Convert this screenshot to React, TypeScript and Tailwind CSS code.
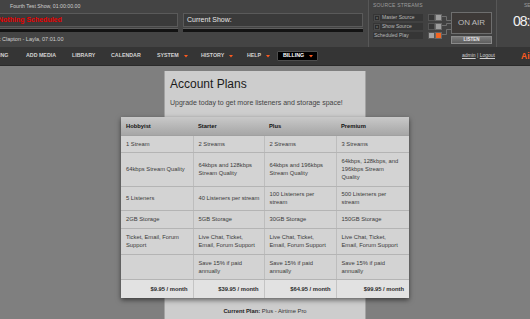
import React from "react";

const Tri = () => (
  <svg width="4" height="3" viewBox="0 0 4 3" className="ml-[5px] shrink-0">
    <path d="M0 0 L4 0 L2 2.5 Z" fill="#ff5a1f" />
  </svg>
);

const rows: { h: string; cells: React.ReactNode[] }[] = [
  { h: "h-[17px]", cells: ["1 Stream", "2 Streams", "2 Streams", "3 Streams"] },
  {
    h: "h-[34px]",
    cells: [
      "64kbps Stream Quality",
      <>64kbps and 128kbps<br />Stream Quality</>,
      <>64kbps and 196kbps<br />Stream Quality</>,
      <>64kbps, 128kbps, and<br />196kbps Stream<br />Quality</>,
    ],
  },
  {
    h: "h-[24px]",
    cells: [
      "5 Listeners",
      "40 Listeners per stream",
      <>100 Listeners per<br />stream</>,
      <>500 Listeners per<br />stream</>,
    ],
  },
  { h: "h-[18px]", cells: ["2GB Storage", "5GB Storage", "30GB Storage", "150GB Storage"] },
  {
    h: "h-[26px]",
    cells: [
      <>Ticket, Email, Forum<br />Support</>,
      <>Live Chat, Ticket,<br />Email, Forum Support</>,
      <>Live Chat, Ticket,<br />Email, Forum Support</>,
      <>Live Chat, Ticket,<br />Email, Forum Support</>,
    ],
  },
  {
    h: "h-[25px]",
    cells: [
      "",
      <>Save 15% if paid<br />annually</>,
      <>Save 15% if paid<br />annually</>,
      <>Save 15% if paid<br />annually</>,
    ],
  },
];

const prices = ["$9.95 / month", "$39.95 / month", "$64.95 / month", "$99.95 / month"];

export default function App() {
  return (
    <div className="w-[530px] h-[319px] overflow-hidden bg-[#7f7f7f] flex flex-col font-['Liberation_Sans',Arial,sans-serif]">
      {/* Header */}
      <div className="flex h-[47px] shrink-0 bg-[#444444]">
        {/* left */}
        <div className="w-[178px] shrink-0 flex flex-col">
          <div className="h-[13px] flex items-center pl-[10px] text-[5.2px] text-[#cfcfcf] whitespace-nowrap">
            Fourth Test Show, 01:00:00.00
          </div>
          <div className="h-[14px] border-y border-r border-[#5a5a5a] bg-[#3a3a3a] flex items-center overflow-hidden">
            <span className="ml-[-2px] text-[7px] font-bold text-[#e80000] whitespace-nowrap">Nothing Scheduled</span>
          </div>
          <div className="mt-[1px] h-[4px] border-t border-[#5e5e5e] bg-[#131313]" />
          <div className="flex-1 flex items-center overflow-hidden">
            <span className="ml-[-9px] text-[5.5px] text-[#cfcfcf] whitespace-nowrap">Eric Clapton - Layla, 07:01.00</span>
          </div>
        </div>
        {/* middle */}
        <div className="ml-[5px] w-[180px] shrink-0 flex flex-col">
          <div className="h-[13px]" />
          <div className="h-[14px] border border-[#5a5a5a] bg-[#3a3a3a] flex items-center pl-[3px]">
            <span className="text-[7px] text-[#e6e6e6] whitespace-nowrap">Current Show:</span>
          </div>
          <div className="mt-[1px] h-[4px] border-t border-[#5e5e5e] bg-[#131313]" />
        </div>
        {/* source streams */}
        <div className="ml-[5px] w-[129px] shrink-0 border-x border-[#575757] bg-[#414141] flex flex-col px-[4px]">
          <div className="h-[11px] flex items-center text-[5px] text-[#9c9c9c] tracking-[0.2px] whitespace-nowrap">
            SOURCE STREAMS
          </div>
          <div className="flex mt-[1px]">
            <div className="flex flex-col gap-[2px] pt-[2px]">
              {[
                { label: "Master Source", x: true, a: "#363636", b: "#9d9d9d" },
                { label: "Show Source", x: true, a: "#363636", b: "#9d9d9d" },
                { label: "Scheduled Play", x: false, a: "#a3a3a3", b: "#f26522" },
              ].map((r) => (
                <div key={r.label} className="flex items-center h-[7px]">
                  <div className="w-[50px] h-[7px] bg-[#363636] flex items-center">
                    {r.x ? (
                      <span className="w-[6px] h-[6px] ml-[1px] mr-[2px] bg-[#2b2b2b] border border-[#4a4a4a] text-[4px] text-[#999] flex items-center justify-center leading-none">
                        x
                      </span>
                    ) : (
                      <span className="w-[1px]" />
                    )}
                    <span className="text-[5px] text-[#b8b8b8] whitespace-nowrap">{r.label}</span>
                  </div>
                  <div className="ml-[5px] flex">
                    <div className="w-[7px] h-[7px] border border-[#555]" style={{ background: r.a }} />
                    <div className="w-[7px] h-[7px] border border-[#666]" style={{ background: r.b }} />
                  </div>
                </div>
              ))}
            </div>
            <svg width="9" height="27" viewBox="0 0 9 27" className="shrink-0">
              <path d="M0 4.5 H4.5 V8.5 H9" stroke="#7a7a7a" strokeWidth="0.8" fill="none" />
              <path d="M0 13.5 H4.5 V11.5 H9" stroke="#7a7a7a" strokeWidth="0.8" fill="none" />
              <path d="M0 22.5 H4.5 V17.5 H9" stroke="#7a7a7a" strokeWidth="0.8" fill="none" />
            </svg>
            <div className="flex flex-col w-[42px]">
              <div className="h-[22px] border border-[#6e6e6e] bg-[#3d3937] flex items-center justify-center text-[8px] text-[#bcbcbc] whitespace-nowrap">
                ON AIR
              </div>
              <div className="mt-[2px] h-[8px] border border-[#8a8a8a] bg-gradient-to-b from-[#7c7c7c] to-[#5e5e5e] flex items-center justify-center text-[4.5px] font-bold text-[#e8e8e8]">
                LISTEN
              </div>
            </div>
          </div>
        </div>
        {/* clock */}
        <div className="flex-1 flex flex-col overflow-hidden">
          <div className="h-[12px] flex items-center pl-[27px] text-[5px] text-[#9c9c9c] whitespace-nowrap">SERVER TIME</div>
          <div className="pl-[16px] mt-[1px] text-[14px] leading-[16px] tracking-[-1px] text-[#f2f2f2] whitespace-nowrap">08:05</div>
        </div>
      </div>

      {/* Nav */}
      <div className="h-[19px] shrink-0 bg-[#353535] border-b border-[#2a2a2a] flex items-center overflow-hidden text-[5.3px] font-bold text-[#d2d2d2] whitespace-nowrap">
        <div className="w-[55px] ml-[-29px] shrink-0">NOW PLAYING</div>
        <div className="w-[46px] shrink-0">ADD MEDIA</div>
        <div className="w-[39px] shrink-0">LIBRARY</div>
        <div className="w-[46px] shrink-0">CALENDAR</div>
        <div className="w-[44px] shrink-0 flex items-center">SYSTEM<Tri /></div>
        <div className="w-[46px] shrink-0 flex items-center">HISTORY<Tri /></div>
        <div className="w-[30px] shrink-0 flex items-center">HELP<Tri /></div>
        <div className="w-[41px] h-[10px] shrink-0 bg-black border border-[#4d4d4d] rounded-[1px] flex items-center pl-[5px] text-white">
          BILLING<Tri />
        </div>
        <div className="ml-auto font-normal text-[5px] text-[#cfcfcf]">
          <span className="underline">admin</span> | <span className="underline">Logout</span>
        </div>
        <div className="w-[35px] shrink-0 pl-[26px] text-[8.5px] font-bold text-[#ff5a1f]">Airtime</div>
      </div>

      {/* Main */}
      <div className="flex-1 flex justify-center">
        <div className="w-[202px] mt-[5px] bg-[#cdcdcd] border-x border-[#a3a3a3] pl-[5px] flex flex-col">
          <div className="pt-[6px] text-[12px] leading-[14px] text-[#1a1a1a]">Account Plans</div>
          <div className="mt-[7px] text-[7px] leading-[9px] text-[#444]">
            Upgrade today to get more listeners and storage space!
          </div>
          <table className="mt-[10px] ml-[-49px] w-[288px] table-fixed border-collapse shadow-[0_2px_5px_rgba(0,0,0,0.55)] text-[5.8px] leading-[8px] text-[#3a3a3a]">
            <colgroup>
              <col className="w-[72px]" />
              <col className="w-[71px]" />
              <col className="w-[72px]" />
              <col className="w-[73px]" />
            </colgroup>
            <thead>
              <tr className="h-[18px] bg-gradient-to-b from-[#c9c9c9] to-[#a6a6a6]">
                {["Hobbyist", "Starter", "Plus", "Premium"].map((h) => (
                  <th key={h} className="text-left pl-[5px] font-bold text-[#111] border-b border-[#a0a0a0]">
                    {h}
                  </th>
                ))}
              </tr>
            </thead>
            <tbody>
              {rows.map((r, i) => (
                <tr key={i} className={`${r.h} bg-[#d3d3d3]`}>
                  {r.cells.map((c, j) => (
                    <td
                      key={j}
                      className="pl-[5px] pr-[2px] align-middle whitespace-nowrap border-b border-[#b4b4b4] border-r border-r-[#bdbdbd] last:border-r-0"
                    >
                      {c}
                    </td>
                  ))}
                </tr>
              ))}
              <tr className="h-[19px] bg-[#e2e2e2]">
                {prices.map((p, j) => (
                  <td key={j} className="text-right pr-[5px] font-bold text-[#2a2a2a] border-r border-[#c4c4c4] last:border-r-0 whitespace-nowrap">
                    {p}
                  </td>
                ))}
              </tr>
            </tbody>
          </table>
          <div className="mt-[9px] ml-[-5px] text-center text-[5.8px] text-[#333] whitespace-nowrap">
            <span className="font-bold text-[#222]">Current Plan:</span> Plus - Airtime Pro
          </div>
        </div>
      </div>
    </div>
  );
}
